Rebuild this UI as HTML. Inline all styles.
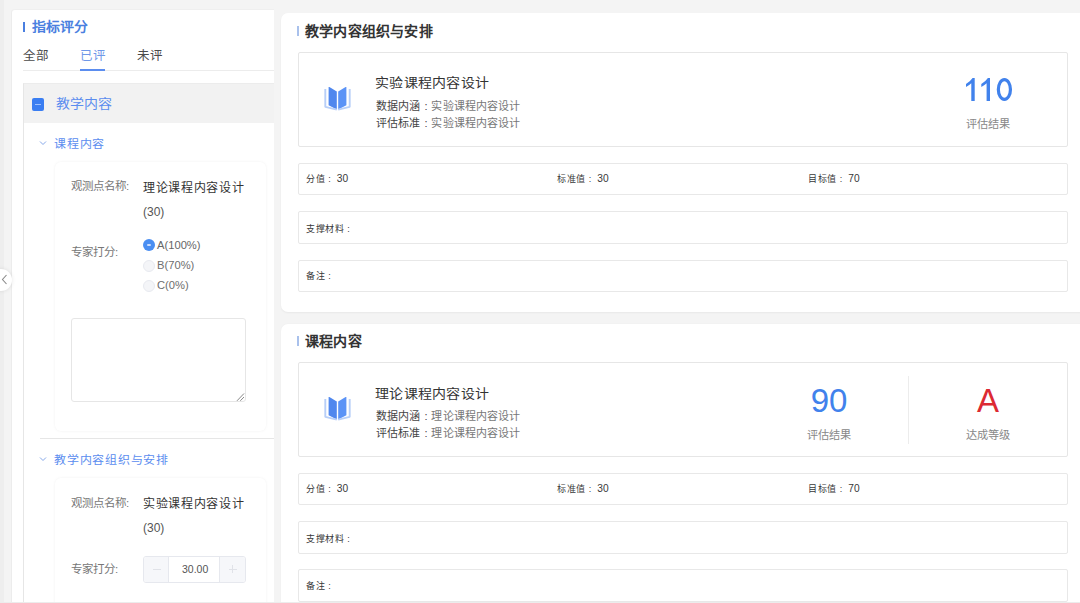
<!DOCTYPE html>
<html lang="zh-CN">
<head>
<meta charset="utf-8">
<style>
*{box-sizing:border-box;margin:0;padding:0}
html,body{width:1080px;height:603px;overflow:hidden}
body{background:#f4f4f4;font-family:"Liberation Sans",sans-serif;color:#333;position:relative}
.a{position:absolute}
.t{position:absolute;white-space:nowrap;line-height:1}
.sy{transform:scaleY(.9);transform-origin:0 50%}
.c{display:inline-block;width:1em;text-align:center;letter-spacing:0}
.n{font-size:10.2px;letter-spacing:0;position:relative;top:0px}
</style>
</head>
<body>
<!-- left strip -->
<div class="a" style="left:0;top:0;width:4px;height:603px;background:#eeeeee"></div>

<!-- left panel -->
<div class="a" style="left:11px;top:9px;width:263px;height:594px;background:#fff;border-left:1px solid #ececec;border-top:1px solid #efefef;border-radius:4px 0 0 0"></div>

<!-- title -->
<div class="a" style="left:22.5px;top:22px;width:2.5px;height:10px;background:#4a7fe0"></div>
<div class="t sy" style="left:32px;top:19px;font-size:14px;font-weight:bold;color:#4a7fe0">指标评分</div>

<!-- tabs -->
<div class="t" style="left:23px;top:50px;font-size:12.5px;color:#4a4a4a">全部</div>
<div class="t" style="left:80px;top:50px;font-size:12.5px;color:#6f98e8">已评</div>
<div class="t" style="left:137px;top:50px;font-size:12.5px;color:#4a4a4a">未评</div>
<div class="a" style="left:23px;top:70px;width:251px;height:1px;background:#ececec"></div>
<div class="a" style="left:80px;top:69px;width:25px;height:2px;background:#5b8def"></div>

<!-- tree -->
<div class="a" style="left:23px;top:83px;width:251px;height:520px;border-left:1px solid #e6e6e6;border-top:1px solid #ececec"></div>
<div class="a" style="left:24px;top:84px;width:250px;height:39px;background:#f2f2f2"></div>
<div class="a" style="left:32px;top:98px;width:12px;height:12.5px;border-radius:2px;background:#3a7ef2"></div>
<div class="a" style="left:34.5px;top:103.6px;width:6px;height:1.6px;background:#9cc0ff"></div>
<div class="t sy" style="left:56px;top:96.8px;font-size:14px;color:#5b8def">教学内容</div>

<!-- sub 1 -->
<svg class="a" style="left:39px;top:140px" width="8" height="6" viewBox="0 0 8 6"><path d="M1 1.5 L4 4.5 L7 1.5" fill="none" stroke="#86a8ea" stroke-width="1"/></svg>
<div class="t sy" style="left:54px;top:137.5px;font-size:12px;letter-spacing:.75px;color:#5b8def">课程内容</div>

<div class="a" style="left:55px;top:162px;width:211px;height:269px;border-radius:6px;background:#fff;box-shadow:0 0 3px rgba(0,0,0,.06)"></div>
<div class="t" style="left:71px;top:181px;font-size:11.5px;color:#777">观测点名称:</div>
<div class="t" style="left:143px;top:181.5px;font-size:12px;letter-spacing:.7px;color:#333">理论课程内容设计</div>
<div class="t" style="left:143px;top:206px;font-size:12px;color:#555">(30)</div>
<div class="t" style="left:71px;top:246.5px;font-size:11.5px;color:#777">专家打分:</div>

<div class="a" style="left:142.5px;top:239px;width:12px;height:12px;border-radius:50%;background:#4a8ef2"></div>
<div class="a" style="left:146.5px;top:244.3px;width:4px;height:2px;border-radius:1px;background:#c9dcff"></div>
<div class="t" style="left:157px;top:239.5px;font-size:11.2px;color:#666">A(100%)</div>
<div class="a" style="left:142.5px;top:259.5px;width:12px;height:12px;border-radius:50%;background:#f4f5f8;border:1px solid #e8eaf0"></div>
<div class="t" style="left:157px;top:259.5px;font-size:11.2px;color:#6e6e6e">B(70%)</div>
<div class="a" style="left:142.5px;top:280px;width:12px;height:12px;border-radius:50%;background:#f4f5f8;border:1px solid #e8eaf0"></div>
<div class="t" style="left:157px;top:280px;font-size:11.2px;color:#6e6e6e">C(0%)</div>

<div class="a" style="left:71px;top:318px;width:175px;height:84px;border:1px solid #e6e6e6;border-radius:3px;background:#fff"></div>
<svg class="a" style="left:236px;top:392px" width="9" height="9" viewBox="0 0 9 9"><path d="M1 8.8 L8 1.5 M4.3 8.8 L8 5" stroke="#7a7a7a" stroke-width="0.9"/></svg>

<div class="a" style="left:40px;top:438px;width:234px;height:1px;background:#e6e6e6"></div>

<!-- sub 2 -->
<svg class="a" style="left:39px;top:456px" width="8" height="6" viewBox="0 0 8 6"><path d="M1 1.5 L4 4.5 L7 1.5" fill="none" stroke="#86a8ea" stroke-width="1"/></svg>
<div class="t sy" style="left:54px;top:454px;font-size:12px;letter-spacing:.75px;color:#5b8def">教学内容组织与安排</div>

<div class="a" style="left:55px;top:478px;width:211px;height:140px;border-radius:6px;background:#fff;box-shadow:0 0 3px rgba(0,0,0,.06)"></div>
<div class="t" style="left:71px;top:497.5px;font-size:11.5px;color:#777">观测点名称:</div>
<div class="t" style="left:143px;top:497.5px;font-size:12px;letter-spacing:.7px;color:#333">实验课程内容设计</div>
<div class="t" style="left:143px;top:522px;font-size:12px;color:#555">(30)</div>
<div class="t" style="left:71px;top:563.5px;font-size:11.5px;color:#777">专家打分:</div>
<div class="a" style="left:143px;top:555.5px;width:102.5px;height:27px;border:1px solid #e6e8ee;border-radius:3px;background:#fff;overflow:hidden">
  <div class="a" style="left:0;top:0;width:25px;height:25px;background:#f6f7fa;border-right:1px solid #e6e8ee"></div>
  <div class="a" style="left:8.5px;top:12px;width:8px;height:1px;background:#e0e2e8"></div>
  <div class="a" style="right:0;top:0;width:25.5px;height:25px;background:#f6f7fa;border-left:1px solid #e6e8ee"></div>
  <div class="a" style="left:84.5px;top:12px;width:8px;height:1px;background:#e0e2e8"></div>
  <div class="a" style="left:88px;top:8.5px;width:1px;height:8px;background:#e0e2e8"></div>
  <div class="t" style="left:38px;top:7.5px;font-size:10.5px;color:#555">30.00</div>
</div>

<!-- handle -->
<div class="a" style="left:-10px;top:269px;width:22px;height:22px;border-radius:50%;background:#fff;box-shadow:0 0 4px rgba(0,0,0,.10)"></div>
<svg class="a" style="left:1px;top:274px" width="7" height="11" viewBox="0 0 7 11"><path d="M5.5 1 L1.5 5.5 L5.5 10" fill="none" stroke="#8a8a8a" stroke-width="1.1"/></svg>

<!-- ============ right card 1 ============ -->
<div class="a" style="left:281px;top:13px;width:830px;height:298.5px;background:#fff;border-radius:7px;box-shadow:0 1px 2px rgba(0,0,0,.05)"></div>
<div class="a" style="left:297px;top:25.5px;width:2px;height:10px;background:#a9c1ec"></div>
<div class="t" style="left:305px;top:23.5px;font-size:14px;letter-spacing:.2px;font-weight:bold;color:#333">教学内容组织与安排</div>

<div class="a" style="left:298px;top:52px;width:770px;height:95px;border:1px solid #e6e6e6;border-radius:2px"></div>
<svg class="a" style="left:322px;top:85px" width="31" height="28" viewBox="322 85 31 28">
  <path d="M328.6 87.5 Q328.6 86.6 329.4 87 L336.8 91.4 V109.6 L328.6 105.2 Z" fill="#4f87ee"/>
  <path d="M346.4 87.5 Q346.4 86.6 345.6 87 L338.2 91.4 V109.6 L346.4 105.2 Z" fill="#5b93f6"/>
  <path d="M325.3 89 V106.8 L336.8 109.6" fill="none" stroke="#b8cff8" stroke-width="1.9" stroke-linejoin="round"/>
  <path d="M349.7 89 V106.8 L338.2 109.6" fill="none" stroke="#b8cff8" stroke-width="1.9" stroke-linejoin="round"/>
</svg>
<div class="t sy" style="left:375px;top:76px;font-size:14px;letter-spacing:.3px;color:#333">实验课程内容设计</div>
<div class="t" style="left:376px;top:101px;font-size:11px;letter-spacing:.1px;color:#444">数据内涵<span class="c">:</span><span style="color:#777">实验课程内容设计</span></div>
<div class="t" style="left:376px;top:117.5px;font-size:11px;letter-spacing:.1px;color:#444">评估标准<span class="c">:</span><span style="color:#777">实验课程内容设计</span></div>
<svg class="a" style="left:960px;top:74px" width="60" height="32" viewBox="960 74 60 32"><g fill="#4182ec">
  <path d="M974.7 78 V101 H971.3 V83.3 Q969 85.6 966 87 V83.9 Q970.2 81.6 972.6 78 Z"/>
  <path d="M990 78 V101 H986.6 V83.3 Q984.3 85.6 981.3 87 V83.9 Q985.5 81.6 987.9 78 Z"/>
  </g><ellipse cx="1004.4" cy="89.5" rx="6.05" ry="9.85" fill="none" stroke="#4182ec" stroke-width="3.2"/></svg>
<div class="t" style="left:908px;top:118.5px;width:160px;text-align:center;font-size:11.2px;color:#888">评估结果</div>

<div class="a" style="left:298px;top:163px;width:770px;height:32px;border:1px solid #e8e8e8;border-radius:2px"></div>
<div class="t" style="left:306px;top:173.8px;font-size:9px;letter-spacing:.5px;color:#383838">分值<span class="c">:</span><span class="n"> 30</span></div>
<div class="t" style="left:557px;top:173.8px;font-size:9px;letter-spacing:.5px;color:#383838">标准值<span class="c">:</span><span class="n"> 30</span></div>
<div class="t" style="left:808px;top:173.8px;font-size:9px;letter-spacing:.5px;color:#383838">目标值<span class="c">:</span><span class="n"> 70</span></div>
<div class="a" style="left:298px;top:211px;width:770px;height:33px;border:1px solid #e8e8e8;border-radius:2px"></div>
<div class="t" style="left:306px;top:224.5px;font-size:9px;letter-spacing:.5px;color:#383838">支撑材料<span class="c">:</span></div>
<div class="a" style="left:298px;top:260px;width:770px;height:32px;border:1px solid #e8e8e8;border-radius:2px"></div>
<div class="t" style="left:306px;top:272px;font-size:9px;letter-spacing:.5px;color:#383838">备注<span class="c">:</span></div>

<!-- ============ right card 2 ============ -->
<div class="a" style="left:281px;top:324px;width:830px;height:300px;background:#fff;border-radius:7px;box-shadow:0 0 2px rgba(0,0,0,.04)"></div>
<div class="a" style="left:297px;top:335.5px;width:2px;height:10px;background:#a9c1ec"></div>
<div class="t" style="left:305px;top:334px;font-size:14px;letter-spacing:.2px;font-weight:bold;color:#333">课程内容</div>

<div class="a" style="left:298px;top:362px;width:770px;height:95px;border:1px solid #e6e6e6;border-radius:2px"></div>
<svg class="a" style="left:322px;top:395px" width="31" height="28" viewBox="322 85 31 28">
  <path d="M328.6 87.5 Q328.6 86.6 329.4 87 L336.8 91.4 V109.6 L328.6 105.2 Z" fill="#4f87ee"/>
  <path d="M346.4 87.5 Q346.4 86.6 345.6 87 L338.2 91.4 V109.6 L346.4 105.2 Z" fill="#5b93f6"/>
  <path d="M325.3 89 V106.8 L336.8 109.6" fill="none" stroke="#b8cff8" stroke-width="1.9" stroke-linejoin="round"/>
  <path d="M349.7 89 V106.8 L338.2 109.6" fill="none" stroke="#b8cff8" stroke-width="1.9" stroke-linejoin="round"/>
</svg>
<div class="t sy" style="left:375px;top:386px;font-size:14px;letter-spacing:.3px;color:#333">理论课程内容设计</div>
<div class="t" style="left:376px;top:411px;font-size:11px;letter-spacing:.1px;color:#444">数据内涵<span class="c">:</span><span style="color:#777">理论课程内容设计</span></div>
<div class="t" style="left:376px;top:427.5px;font-size:11px;letter-spacing:.1px;color:#444">评估标准<span class="c">:</span><span style="color:#777">理论课程内容设计</span></div>
<div class="t" style="left:749px;top:384.2px;width:160px;text-align:center;font-size:33px;color:#4182ec">90</div>
<div class="t" style="left:749px;top:429.5px;width:160px;text-align:center;font-size:11.2px;color:#888">评估结果</div>
<div class="a" style="left:908px;top:376px;width:1px;height:68px;background:#ececec"></div>
<div class="t" style="left:908px;top:384.2px;width:160px;text-align:center;font-size:33px;color:#dc2a33">A</div>
<div class="t" style="left:908px;top:429.5px;width:160px;text-align:center;font-size:11.2px;color:#888">达成等级</div>

<div class="a" style="left:298px;top:473px;width:770px;height:32px;border:1px solid #e8e8e8;border-radius:2px"></div>
<div class="t" style="left:306px;top:483.8px;font-size:9px;letter-spacing:.5px;color:#383838">分值<span class="c">:</span><span class="n"> 30</span></div>
<div class="t" style="left:557px;top:483.8px;font-size:9px;letter-spacing:.5px;color:#383838">标准值<span class="c">:</span><span class="n"> 30</span></div>
<div class="t" style="left:808px;top:483.8px;font-size:9px;letter-spacing:.5px;color:#383838">目标值<span class="c">:</span><span class="n"> 70</span></div>
<div class="a" style="left:298px;top:521px;width:770px;height:33px;border:1px solid #e8e8e8;border-radius:2px"></div>
<div class="t" style="left:306px;top:534.5px;font-size:9px;letter-spacing:.5px;color:#383838">支撑材料<span class="c">:</span></div>
<div class="a" style="left:298px;top:569px;width:770px;height:33px;border:1px solid #e8e8e8;border-radius:2px"></div>
<div class="t" style="left:306px;top:582px;font-size:9px;letter-spacing:.5px;color:#383838">备注<span class="c">:</span></div>
<div class="a" style="left:0;top:602px;width:1080px;height:1px;background:#ececec"></div>
</body>
</html>
